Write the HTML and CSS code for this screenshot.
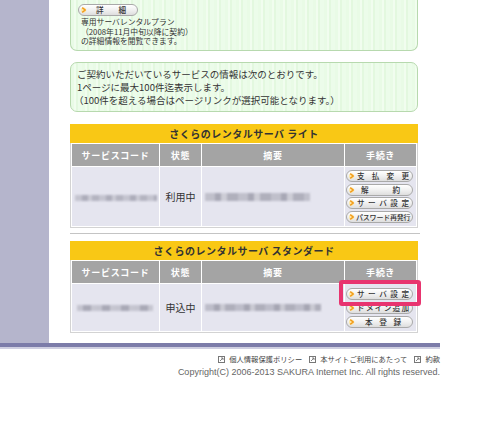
FILE: index.html
```html
<!DOCTYPE html>
<html lang="ja">
<head>
<meta charset="utf-8">
<title>契約サービス一覧</title>
<link rel="stylesheet" href="styles.css">
</head>
<body>
<div class="page">
  <div class="layout">
    <aside class="side"></aside>
    <main class="main">
      <div class="info-box top-box">
        <span class="btn btn-detail">
          <svg class="btn-ico" viewBox="0 0 6 8" width="6" height="8"><circle cx="2.5" cy="4" r="2.6" fill="#fde9a8"/><path d="M1.2 1.6 L4.2 4 L1.2 6.4" fill="none" stroke="#f29a1a" stroke-width="1.4"/></svg>
          <span class="btn-lbl lbl-detail"><span>詳</span><span>細</span></span>
        </span>
        <p class="top-text">専用サーバレンタルプラン<br>（2008年11月中旬以降に契約）<br>の詳細情報を閲覧できます。</p>
      </div>

      <div class="info-box notice">
        ご契約いただいているサービスの情報は次のとおりです。<br>
        1ページに最大100件迄表示します。<br>
        <span class="paren">（100件を超える場合はページリンクが選択可能となります。）</span>
      </div>

      <section class="svc">
        <h2 class="svc-title">さくらのレンタルサーバ ライト</h2>
        <table class="svc-table">
          <colgroup><col class="c1"><col class="c2"><col class="c3"><col class="c4"></colgroup>
          <tr><th>サービスコード</th><th>状態</th><th>摘要</th><th>手続き</th></tr>
          <tr class="row-lite">
            <td class="code"><span class="blur blur-code"></span></td>
            <td class="state">利用中</td>
            <td class="desc"><span class="blur blur-desc"></span></td>
            <td class="ops">
              <div class="ops-list">
                <span class="btn"><svg class="btn-ico" viewBox="0 0 6 8" width="6" height="8"><circle cx="2.5" cy="4" r="2.6" fill="#fde9a8"/><path d="M1.2 1.6 L4.2 4 L1.2 6.4" fill="none" stroke="#f29a1a" stroke-width="1.4"/></svg><span class="btn-lbl"><span>支</span><span>払</span><span>変</span><span>更</span></span></span>
                <span class="btn"><svg class="btn-ico" viewBox="0 0 6 8" width="6" height="8"><circle cx="2.5" cy="4" r="2.6" fill="#fde9a8"/><path d="M1.2 1.6 L4.2 4 L1.2 6.4" fill="none" stroke="#f29a1a" stroke-width="1.4"/></svg><span class="btn-lbl lbl-two"><span>解</span><span>約</span></span></span>
                <span class="btn"><svg class="btn-ico" viewBox="0 0 6 8" width="6" height="8"><circle cx="2.5" cy="4" r="2.6" fill="#fde9a8"/><path d="M1.2 1.6 L4.2 4 L1.2 6.4" fill="none" stroke="#f29a1a" stroke-width="1.4"/></svg><span class="btn-lbl"><span>サ</span><span>ー</span><span>バ</span><span>設</span><span>定</span></span></span>
                <span class="btn"><svg class="btn-ico" viewBox="0 0 6 8" width="6" height="8"><circle cx="2.5" cy="4" r="2.6" fill="#fde9a8"/><path d="M1.2 1.6 L4.2 4 L1.2 6.4" fill="none" stroke="#f29a1a" stroke-width="1.4"/></svg><span class="btn-lbl lbl-tight">パスワード再発行</span></span>
              </div>
            </td>
          </tr>
        </table>
      </section>

      <hr class="divider">

      <section class="svc svc-second">
        <h2 class="svc-title">さくらのレンタルサーバ スタンダード</h2>
        <table class="svc-table">
          <colgroup><col class="c1"><col class="c2"><col class="c3"><col class="c4"></colgroup>
          <tr><th>サービスコード</th><th>状態</th><th>摘要</th><th>手続き</th></tr>
          <tr class="row-std">
            <td class="code"><span class="blur blur-code2"></span></td>
            <td class="state">申込中</td>
            <td class="desc"><span class="blur blur-desc2"></span></td>
            <td class="ops">
              <div class="ops-list ops-loose">
                <span class="btn btn-hl"><svg class="btn-ico" viewBox="0 0 6 8" width="6" height="8"><circle cx="2.5" cy="4" r="2.6" fill="#fde9a8"/><path d="M1.2 1.6 L4.2 4 L1.2 6.4" fill="none" stroke="#f29a1a" stroke-width="1.4"/></svg><span class="btn-lbl"><span>サ</span><span>ー</span><span>バ</span><span>設</span><span>定</span></span></span>
                <span class="btn"><svg class="btn-ico" viewBox="0 0 6 8" width="6" height="8"><circle cx="2.5" cy="4" r="2.6" fill="#fde9a8"/><path d="M1.2 1.6 L4.2 4 L1.2 6.4" fill="none" stroke="#f29a1a" stroke-width="1.4"/></svg><span class="btn-lbl"><span>ド</span><span>メ</span><span>イ</span><span>ン</span><span>追</span><span>加</span></span></span>
                <span class="btn"><svg class="btn-ico" viewBox="0 0 6 8" width="6" height="8"><circle cx="2.5" cy="4" r="2.6" fill="#fde9a8"/><path d="M1.2 1.6 L4.2 4 L1.2 6.4" fill="none" stroke="#f29a1a" stroke-width="1.4"/></svg><span class="btn-lbl lbl-three"><span>本</span><span>登</span><span>録</span></span></span>
              </div>
            </td>
          </tr>
        </table>
      </section>
    </main>
  </div>
  <div class="footbar"></div>
  <footer class="foot">
    <div class="foot-links">
      <span class="flink"><svg class="f-ico" viewBox="0 0 7 7" width="7" height="7"><rect x="0.5" y="0.5" width="6" height="6" fill="#fff" stroke="#777"/><path d="M2 5 L5 2 M3 2 H5 V4" fill="none" stroke="#777" stroke-width="0.9"/></svg>個人情報保護ポリシー</span>
      <span class="flink"><svg class="f-ico" viewBox="0 0 7 7" width="7" height="7"><rect x="0.5" y="0.5" width="6" height="6" fill="#fff" stroke="#777"/><path d="M2 5 L5 2 M3 2 H5 V4" fill="none" stroke="#777" stroke-width="0.9"/></svg>本サイトご利用にあたって</span>
      <span class="flink"><svg class="f-ico" viewBox="0 0 7 7" width="7" height="7"><rect x="0.5" y="0.5" width="6" height="6" fill="#fff" stroke="#777"/><path d="M2 5 L5 2 M3 2 H5 V4" fill="none" stroke="#777" stroke-width="0.9"/></svg>約款</span>
    </div>
    <div class="copy">Copyright(C) 2006-2013 SAKURA Internet Inc. All rights reserved.</div>
  </footer>
</div>
</body>
</html>
```
FILE: styles.css
```css
* { box-sizing: border-box; }

body {
  margin: 0;
  background: #fff;
  font-family: "Noto Sans CJK JP", "Noto Sans", sans-serif;
  color: #333;
}

.page { width: 500px; }

.layout {
  display: flex;
  width: 440px;
}

.side {
  width: 49px;
  flex: none;
  background: #b5b5cc;
}

.main {
  width: 391px;
  padding: 0 0 10px 21px;
}

.info-box {
  width: 348px;
  border: 1px solid #b7d9ae;
  border-radius: 7px;
  background: repeating-linear-gradient(90deg, #e9fbe6 0 3px, #f1fdef 3px 5px, #e3f8df 5px 7px, #ecfcea 7px 11px);
}

.top-box {
  height: 51px;
  border-top: none;
  border-radius: 0 0 7px 7px;
  padding: 4px 0 0 7px;
}

.top-text {
  margin: 1px 0 0 3px;
  font-size: 7.8px;
  line-height: 9.5px;
  color: #333;
}

.notice {
  margin-top: 11px;
  height: 50px;
  padding: 5px 0 0 6px;
  font-size: 9.5px;
  line-height: 13px;
  color: #333;
}

.paren { margin-left: -3px; }

/* buttons */
.btn {
  display: flex;
  align-items: center;
  width: 67px;
  height: 12px;
  border: 1px solid #a9a9a9;
  border-radius: 6px;
  background: linear-gradient(#ffffff, #f2f2f2 45%, #dedede);
  padding: 0 3px 0 2px;
  font-size: 7.6px;
  font-weight: 500;
  color: #333;
}

.btn-ico { flex: none; }

.btn-lbl {
  flex: 1;
  display: flex;
  justify-content: space-between;
  margin-left: 2px;
  line-height: 10px;
  white-space: nowrap;
}

.lbl-two { padding: 0 9px 0 4px; }
.lbl-three { padding: 0 8px 0 8px; }
.lbl-tight {
  display: block;
  margin-left: 1px;
  font-size: 7px;
  letter-spacing: -0.2px;
}

.btn-detail {
  width: 60px;
  height: 12px;
}
.lbl-detail { padding: 0 8px 0 7px; }

/* service sections */
.svc {
  margin-top: 12px;
  width: 348px;
}

.svc-second { margin-top: 7px; }

.svc-title {
  margin: 0;
  height: 19px;
  background: #f9c815;
  font-size: 10px;
  font-weight: 700;
  line-height: 19px;
  text-align: center;
  letter-spacing: 0.5px;
  color: #333;
}

.svc-table {
  width: 348px;
  table-layout: fixed;
  border: 1px solid #d3d3d3;
  border-top: none;
  border-spacing: 1px;
  background: #fff;
}

.c1 { width: 87px; }
.c2 { width: 41px; }
.c3 { width: 142px; }
.c4 { width: 71px; }

.svc-table th {
  height: 22px;
  padding: 0;
  background: #a4a4a4;
  color: #fff;
  font-size: 9px;
  font-weight: 700;
  letter-spacing: 0.7px;
}

.svc-table td {
  padding: 0;
  background: #e5e5ef;
}

.row-lite td { height: 59px; }
.row-std td { height: 47px; }

.state {
  text-align: center;
  font-size: 10px;
  color: #333;
}

.code, .desc { padding-left: 3px !important; }

.blur {
  display: block;
  filter: blur(1px);
}

.blur-code {
  width: 82px;
  height: 6px;
  margin-top: 2px;
  background: repeating-linear-gradient(90deg, #c4c4cf 0 7px, #adadba 7px 13px, #cacad4 13px 17px, #b4b4c0 17px 24px);
}

.blur-desc {
  width: 105px;
  height: 8px;
  background: repeating-linear-gradient(90deg, #c0c0cb 0 10px, #a8a8b5 10px 16px, #cdcdd6 16px 22px, #b0b0bc 22px 33px);
}

.blur-code2 {
  width: 76px;
  height: 6px;
  margin-left: 2px;
  background: repeating-linear-gradient(90deg, #c4c4cf 0 6px, #a9a9b6 6px 14px, #c6c6d0 14px 19px);
}

.blur-desc2 {
  width: 116px;
  height: 7px;
  background: repeating-linear-gradient(90deg, #bdbdc9 0 9px, #a6a6b3 9px 15px, #cacad3 15px 20px, #afafbb 20px 30px);
}

.ops { padding-left: 1px !important; }

.ops-list {
  display: flex;
  flex-direction: column;
  gap: 1.5px;
}

.ops-loose { gap: 2px; }

.btn-hl { position: relative; }
.btn-hl::after {
  content: "";
  position: absolute;
  left: -8px;
  right: -9px;
  top: -9px;
  bottom: -7px;
  border: 4px solid #e8346f;
  border-radius: 3px;
  z-index: 2;
}

.divider {
  margin: 5px 0 0 0;
  width: 350px;
  height: 1px;
  border: none;
  background: #c4c4c4;
}

/* footer */
.footbar {
  width: 440px;
  height: 6px;
  background: #7c7ca9;
  border-bottom: 2px solid #cfcfe1;
}

.foot {
  width: 440px;
  text-align: right;
}

.foot-links {
  display: flex;
  justify-content: flex-end;
  gap: 7px;
  margin-top: 6px;
  font-size: 7.3px;
  line-height: 9px;
  color: #444;
}

.flink {
  display: flex;
  align-items: center;
  gap: 4px;
}

.f-ico { flex: none; }

.copy {
  margin-top: 3px;
  font-family: "Liberation Sans", Arial, sans-serif;
  font-size: 9px;
  color: #666;
}
```
